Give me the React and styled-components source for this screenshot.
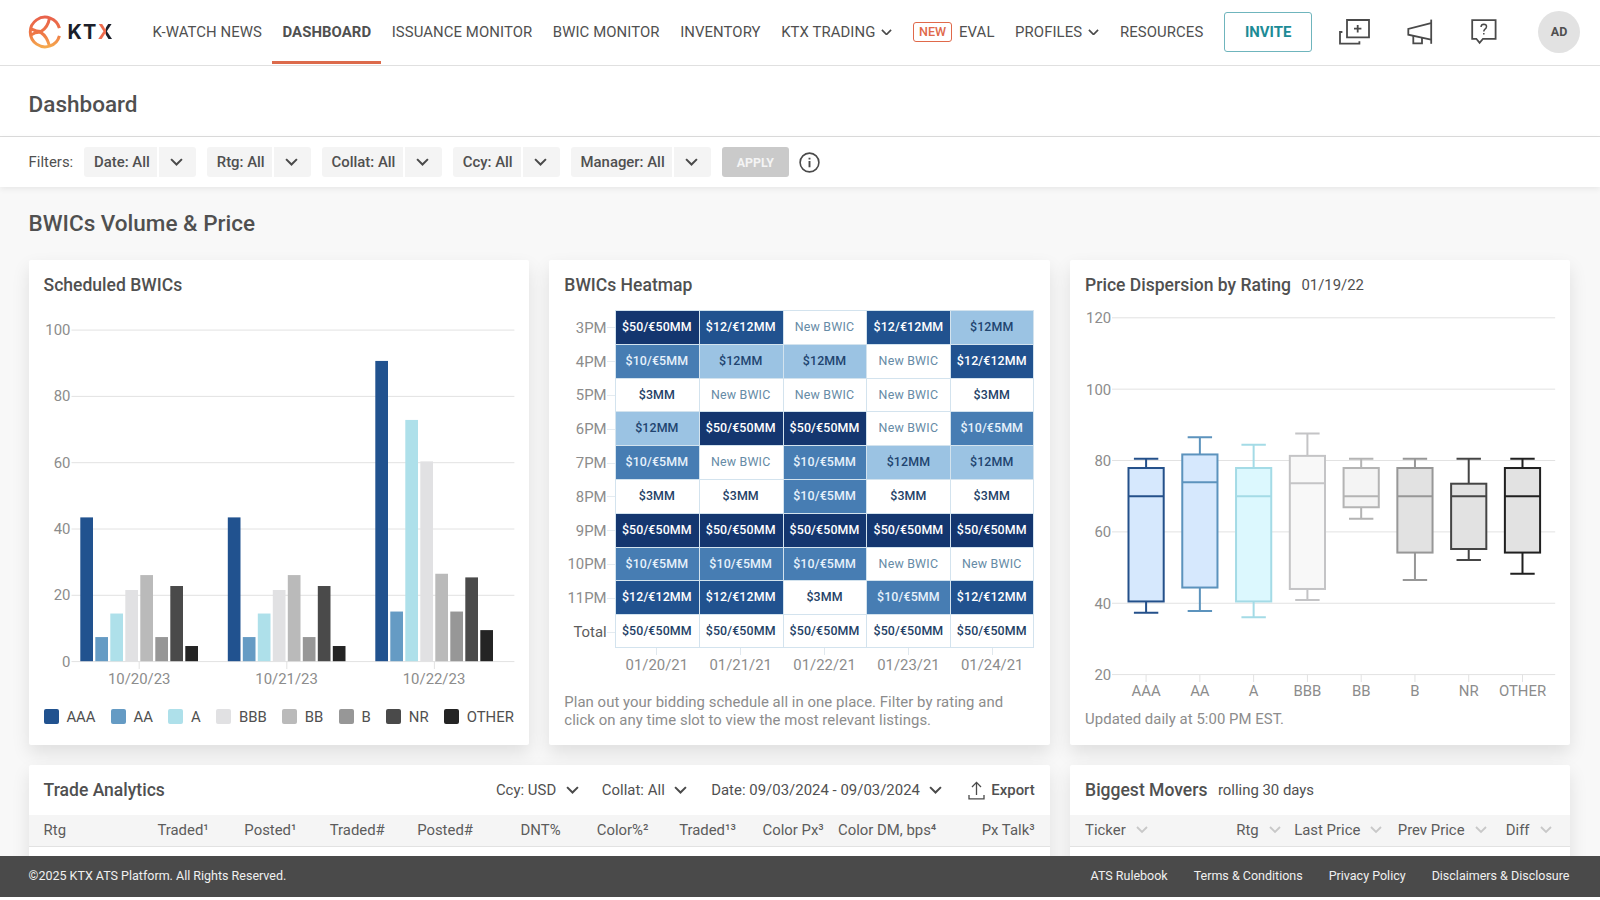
import React from 'react';
import styled, {createGlobalStyle} from 'styled-components';


const GlobalStyle = createGlobalStyle`
    * {
        box-sizing: border-box;
    }

    body {
        margin: 0;
        background: #fff;
        color: #505050;
        font-family: Roboto, "Liberation Sans", sans-serif;
        font-size: 14.9px;
    }
`;

const Page = styled.div`
    display: flex;
    flex-direction: column;
    height: 900px;
    padding-bottom: 3px;
    overflow: hidden;
`;

/* ---------- header ---------- */

const Header = styled.header`
    display: flex;
    align-items: center;
    flex: none;
    height: 66px;
    padding: 0 20px 2px 28px;
    border-bottom: 1px solid #e0e0e0;
    background: #fff;
`;

const Logo = styled.div`
    display: flex;
    align-items: center;
    width: 124.5px;
    gap: 5.5px;
`;

const LogoText = styled.span`
    font-family: Inter, sans-serif;
    font-size: 20px;
    font-weight: 700;
    letter-spacing: 1.2px;
    color: #1c1f2a;
`;

const LogoX = styled.span`
    background: linear-gradient(90deg, #ee6a4c 52%, #1c1f2a 52%);
    background-clip: text;
    -webkit-background-clip: text;
    color: transparent;
`;

const Nav = styled.nav`
    display: flex;
    align-items: center;
    height: 64px;
    white-space: nowrap;
`;

const NavItem = styled.a`
    display: flex;
    align-items: center;
    height: 64px;
    padding: 4px ${p => p.$active ? '10px' : '0'} 0;
    margin: 0 ${p => p.$active ? '0.2px' : '10.3px'};
    border-bottom: 3px solid ${p => p.$active ? '#dc6a4b' : 'transparent'};
    font-weight: ${p => p.$active ? 700 : 400};
    letter-spacing: 0.08px;

    &:first-child {
        margin-left: 0;
    }

    svg {
        margin: 0 0.8px 0 5.5px;
    }
`;

const NewTag = styled.span`
    height: 20px;
    padding: 0 4.6px;
    margin-right: 7.2px;
    border: 1px solid #e0694a;
    border-radius: 3px;
    color: #e0694a;
    font-size: 12.6px;
    font-weight: 500;
    line-height: 18px;
`;

const InviteButton = styled.button`
    width: 87.5px;
    height: 40px;
    margin-left: 10.8px;
    border: 1px solid #6fb5bd;
    border-radius: 3px;
    background: #fff;
    color: #1c8b96;
    font: 700 14.9px Roboto, sans-serif;
`;

const HeaderIcons = styled.div`
    display: grid;
    grid-template-columns: 67.5px 64.8px 1fr 42px;
    flex: 1;
    align-items: center;
    margin-left: 27.2px;
`;

const Avatar = styled.div`
    width: 42px;
    height: 42px;
    border-radius: 50%;
    background: #e2e2e2;
    font-size: 12.5px;
    font-weight: 700;
    line-height: 42px;
    text-align: center;
`;

/* ---------- title and filters ---------- */

const TitleBar = styled.div`
    display: flex;
    align-items: center;
    flex: none;
    height: 71px;
    padding: 6px 28.6px 0;
    border-bottom: 1px solid #dcdcdc;
`;

const PageTitle = styled.h1`
    margin: 0;
    font-size: 22.5px;
    font-weight: 500;
`;

const FilterBar = styled.div`
    display: flex;
    align-items: center;
    flex: none;
    height: 50px;
    padding: 0 28.6px;
    background: #fff;
    box-shadow: 0 2px 6px rgba(0, 0, 0, 0.07);
    z-index: 1;
`;

const FilterLabel = styled.span`
    width: 55.4px;
`;

const Filter = styled.div`
    display: flex;
    gap: 2px;
    height: 30px;
    width: ${p => p.$width}px;
    margin-right: 10.5px;
    font-weight: 500;
    white-space: nowrap;
`;

const FilterText = styled.div`
    flex: 1;
    padding-left: 10px;
    border-radius: 3px 0 0 3px;
    background: #f4f4f4;
    line-height: 30px;
`;

const FilterArrow = styled.div`
    display: flex;
    align-items: center;
    justify-content: center;
    width: 37px;
    padding-right: 2px;
    border-radius: 0 3px 3px 0;
    background: #f4f4f4;
`;

const ApplyButton = styled.button`
    width: 67.5px;
    height: 30px;
    margin-right: 10px;
    border: 0;
    border-radius: 3px;
    background: #cacaca;
    color: #f4f4f4;
    font: 700 12.4px Roboto, sans-serif;
`;

/* ---------- cards ---------- */

const Main = styled.main`
    flex: 1;
    min-height: 0;
    padding: 0 29.6px 0 28.6px;
    overflow: hidden;
    background: #f8f8f8;
`;

const SectionTitle = styled.h2`
    height: 73px;
    margin: 0;
    font-size: 22.5px;
    font-weight: 500;
    line-height: 73px;
`;

const Cards = styled.div`
    display: grid;
    grid-template-columns: repeat(3, 1fr);
    grid-template-rows: 485px 485px;
    gap: 20px 20.4px;
`;

const Card = styled.section`
    display: flex;
    flex-direction: column;
    min-width: 0;
    grid-column: span ${p => p.$span || 1};
    border-radius: 2px;
    background: #fff;
    box-shadow: 0 8px 18px rgba(0, 0, 0, 0.1);
`;

const CardHead = styled.div`
    display: flex;
    align-items: center;
    flex: none;
    height: 50px;
    padding: 0 15px;
    white-space: nowrap;
`;

const CardTitle = styled.h3`
    margin: 0 10.5px 0 0;
    font-size: 17.55px;
    font-weight: 500;
`;

const CardBody = styled.div`
    padding: 0 15px;
`;

const Note = styled.p`
    margin: ${p => p.$top}px 15px 0;
    color: #8c8c8c;
    letter-spacing: 0.05px;
    line-height: 17.7px;
`;

const Chart = styled.svg`
    display: block;
    font-size: 14.9px;
    fill: #8c8c8c;
    overflow: visible;
`;

const Legend = styled.div`
    display: flex;
    justify-content: space-between;
    margin-top: 17px;
`;

const LegendItem = styled.span`
    display: flex;
    align-items: center;
    gap: 7.8px;
    height: 15px;

    &::before {
        content: '';
        width: 15px;
        height: 15px;
        border-radius: 2px;
        background: ${p => p.$color};
    }
`;

/* ---------- heatmap ---------- */

const HeatGrid = styled.div`
    display: grid;
    grid-template-columns: 50.6px repeat(5, 1fr);
    grid-auto-rows: 33.8px;
    margin-right: 0.5px;
`;

const HourLabel = styled.div`
    display: flex;
    align-items: center;
    justify-content: flex-end;
    padding-top: 2px;
    color: ${p => p.$dark ? '#5c5c5c' : '#8c8c8c'};

    &::after {
        content: '';
        width: 8.3px;
        height: 1px;
        background: #e4ebf0;
    }
`;

const tones = {
    navy: {bg: '#14366f', text: '#fff'},
    blue: {bg: '#21528f', text: '#fff'},
    mid: {bg: '#477db3', text: '#e6f1fb'},
    light: {bg: '#9bc3e3', text: '#21446f'},
    plain: {bg: '#fff', text: '#243f66'},
    empty: {bg: '#fff', text: '#668ba6'},
};

const HeatCell = styled.div`
    padding-right: 1px;
    border: 1px solid #d3e3ee;
    border-width: 1px 0 0 1px;
    background: ${p => tones[p.$tone].bg};
    color: ${p => tones[p.$tone].text};
    font-size: 12.4px;
    font-weight: ${p => p.$tone === 'empty' ? 400 : 500};
    letter-spacing: ${p => p.$tone === 'empty' ? '0.2px' : '0.12px'};
    line-height: 32px;
    text-align: center;
    white-space: nowrap;

    &:nth-child(6n) {
        border-right-width: 1px;
    }

    &:nth-child(n + 55) {
        border-bottom-width: 1px;
    }
`;

const DateLabel = styled.div`
    display: flex;
    flex-direction: column;
    align-items: center;
    color: #8c8c8c;

    &::before {
        content: '';
        width: 1px;
        height: 7px;
        margin-bottom: 1px;
        background: #e0e8ee;
    }
`;

/* ---------- tables ---------- */

const Tools = styled.div`
    display: flex;
    align-items: center;
    margin-left: auto;
`;

const Tool = styled.span`
    display: flex;
    align-items: center;
    gap: 9.4px;
    margin-right: ${p => p.$gap}px;
    letter-spacing: 0.03px;
`;

const ExportButton = styled.span`
    display: flex;
    align-items: center;
    gap: 6px;
    font-weight: 500;
`;

const TableHead = styled.div`
    display: grid;
    grid-template-columns: ${p => p.$cols};
    align-items: center;
    height: 32px;
    padding: 0 15px 1px;
    border-bottom: 1px solid #e2e2e2;
    background: #f5f5f5;
    color: #5c5c5c;
    white-space: nowrap;
`;

const Th = styled.span`
    text-align: right;

    &:first-child {
        text-align: left;
    }
`;

const SortTh = styled.span`
    display: flex;
    align-items: center;
    justify-content: ${p => p.$left ? 'flex-start' : 'flex-end'};
    gap: 10px;
`;

/* ---------- footer ---------- */

const Footer = styled.footer`
    display: flex;
    align-items: center;
    justify-content: space-between;
    flex: none;
    height: 41px;
    padding: 0 30.5px 2.5px 28.6px;
    background: #4a4a4a;
    color: #f0f0f0;
    font-size: 12.5px;
`;

const FooterLinks = styled.div`
    display: flex;
    gap: 26px;
`;


const Chevron = ({size = 12, color = '#4a4a4a', stroke = 2}) => (
    <svg width={size} height={size * 0.6} viewBox="0 0 12 7.2" fill="none">
        <path d="M1 1L6 6L11 1" stroke={color} strokeWidth={stroke * 12 / size}/>
    </svg>
);

const LogoMark = () => (
    <svg width="34" height="34" viewBox="0 0 34 34" fill="none">
        <defs>
            <linearGradient id="mark" x1="0" y1="0" x2="0" y2="34" gradientUnits="userSpaceOnUse">
                <stop offset="0" stopColor="#e8604c"/>
                <stop offset="0.55" stopColor="#ee7746"/>
                <stop offset="1" stopColor="#f6b04f"/>
            </linearGradient>
        </defs>
        <g stroke="url(#mark)" strokeWidth="3">
            <path d="M31.4 13.2A14.8 14.8 0 1 0 31.4 20.8"/>
            <path d="M21.4 3.4C20.5 9 17.6 13.6 13 16.6Q9 16.6 3 13.8"/>
            <path d="M3 20Q8.5 16.6 13 17.6Q18.6 21 21.4 30.6"/>
        </g>
    </svg>
);

const FramesIcon = () => (
    <svg width="31" height="26" viewBox="0 0 31 26" fill="none" stroke="#4a4a4a" strokeWidth="1.8">
        <path d="M3.4 13H1V24.7H20.4V22.2"/>
        <path d="M8 1H30V18.4H8Z"/>
        <path d="M18.7 6V13.4M15 9.7H22.4"/>
    </svg>
);

const MegaphoneIcon = () => (
    <svg width="26" height="26" viewBox="0 0 26 26" fill="none" stroke="#4a4a4a" strokeWidth="1.8">
        <path d="M24.2 0.6V24.8"/>
        <path d="M24 4.2L1.3 10V15.7L24 20.7"/>
        <path d="M6.3 17V24.3H15V19"/>
    </svg>
);

const HelpIcon = () => (
    <svg width="26" height="26" viewBox="0 0 26 26" fill="none" stroke="#4a4a4a" strokeWidth="1.8">
        <path d="M1.2 1.2H24.6V19.8H12L8.6 23.9L5.3 19.8H1.2Z"/>
        <path d="M10 8Q10.2 5.2 12.8 5.2Q15.6 5.3 15.5 7.8Q15.4 9.2 13.8 10.3Q12.8 11.1 12.8 12.4M12.8 13.9V15.6" strokeWidth="1.5"/>
    </svg>
);

const InfoIcon = () => (
    <svg width="21" height="21" viewBox="0 0 21 21" fill="none" stroke="#4a4a4a">
        <circle cx="10.5" cy="10.5" r="9.4" strokeWidth="1.6"/>
        <path d="M10.5 9V15.2M10.5 5.8V7.6" strokeWidth="1.9"/>
    </svg>
);

const ExportIcon = () => (
    <svg width="17" height="19" viewBox="0 0 17 19" fill="none" stroke="#4a4a4a" strokeWidth="1.3">
        <path d="M8.5 14V1.4M4 6L8.5 1.4L13 6"/>
        <path d="M1 14V17.8H16V14"/>
    </svg>
);


const ratings = [
    {name: 'AAA', color: '#21528f', fill: '#d6e8fd', line: '#24508a'},
    {name: 'AA', color: '#659bc4', fill: '#d6e8fd', line: '#5c93bd'},
    {name: 'A', color: '#aee0ea', fill: '#dcf8fe', line: '#a4dbe6'},
    {name: 'BBB', color: '#e1e1e3', fill: '#f8f8f8', line: '#c4c4c6'},
    {name: 'BB', color: '#bababa', fill: '#f4f4f4', line: '#b4b4b4'},
    {name: 'B', color: '#979797', fill: '#e2e2e2', line: '#979797'},
    {name: 'NR', color: '#4a4a4a', fill: '#e2e2e2', line: '#454545'},
    {name: 'OTHER', color: '#242424', fill: '#e2e2e2', line: '#202020'},
];

const bwics = [
    {date: '10/20/23', values: [43.5, 7.4, 14.5, 21.6, 26.1, 7.4, 22.8, 4.7]},
    {date: '10/21/23', values: [43.5, 7.4, 14.5, 21.6, 26.1, 7.4, 22.8, 4.7]},
    {date: '10/22/23', values: [90.7, 15.1, 72.9, 60.4, 26.5, 15.1, 25.4, 9.5]},
];

// top whisker, box top, median, box bottom, bottom whisker
const prices = [
    [80.5, 77.9, 70, 40.5, 37.3],
    [86.5, 81.7, 73.9, 44.4, 37.8],
    [84.4, 77.9, 70, 40.5, 36.1],
    [87.6, 81.3, 73.6, 44, 40.9],
    [80.5, 77.9, 70, 66.9, 63.7],
    [80.5, 77.9, 70, 54.2, 46.5],
    [80.5, 73.5, 70, 55.2, 52.1],
    [80.5, 77.9, 70, 54.2, 48.3],
];

const cells = {
    a: ['$50/€50MM', 'navy'],
    b: ['$12/€12MM', 'blue'],
    c: ['$10/€5MM', 'mid'],
    d: ['$12MM', 'light'],
    e: ['$3MM', 'plain'],
    n: ['New BWIC', 'empty'],
    t: ['$50/€50MM', 'plain'],
};

const hours = [
    ['3PM', 'abnbd'],
    ['4PM', 'cddnb'],
    ['5PM', 'ennne'],
    ['6PM', 'daanc'],
    ['7PM', 'cncdd'],
    ['8PM', 'eecee'],
    ['9PM', 'aaaaa'],
    ['10PM', 'cccnn'],
    ['11PM', 'bbecb'],
    ['Total', 'ttttt'],
];

const heatDates = ['01/20/21', '01/21/21', '01/22/21', '01/23/21', '01/24/21'];


const BarChart = () => {
    const y = v => 351.6 - v * 3.315;
    return (
        <Chart width="471" height="382">
            {[0, 20, 40, 60, 80, 100].map(v => (
                <g key={v}>
                    <line x1="27.5" x2="470.4" y1={y(v)} y2={y(v)} stroke="#e2e2e2"/>
                    <text x="26.4" y={y(v) + 5} textAnchor="end">{v}</text>
                </g>
            ))}
            {bwics.map((day, i) => (
                <g key={day.date}>
                    <line x1={95.2 + i * 147.6} x2={95.2 + i * 147.6} y1="352" y2="359" stroke="#e2e2e2"/>
                    {day.values.map((v, j) => (
                        <rect key={j} x={36.3 + i * 147.5 + j * 15} y={y(v)} width="12.7" height={v * 3.315 - 0.4}
                              fill={ratings[j].color}/>
                    ))}
                    <text x={95.2 + i * 147.4} y="374" textAnchor="middle">{day.date}</text>
                </g>
            ))}
        </Chart>
    );
};

const BoxChart = () => {
    const y = v => 364.6 - (v - 20) * 3.568;
    return (
        <Chart width="471" height="395">
            {[20, 40, 60, 80, 100, 120].map(v => (
                <g key={v}>
                    <line x1="27" x2="470.2" y1={y(v)} y2={y(v)} stroke="#e2e2e2"/>
                    <text x="26.2" y={y(v) + 5.6} textAnchor="end">{v}</text>
                </g>
            ))}
            {prices.map(([high, top, median, bottom, low], i) => {
                const x = 61.1 + i * 53.77;
                const {name, fill, line} = ratings[i];
                return (
                    <g key={name}>
                        <line x1={x} x2={x} y1="364.6" y2="372" stroke="#e2e2e2"/>
                        <path d={`M${x} ${y(high)}V${y(low)}M${x - 12.2} ${y(high)}h24.4M${x - 12.2} ${y(low)}h24.4`}
                              stroke={line} strokeWidth="2"/>
                        <rect x={x - 17.6} y={y(top)} width="35.2" height={y(bottom) - y(top)}
                              fill={fill} stroke={line} strokeWidth="2"/>
                        <line x1={x - 17.6} x2={x + 17.6} y1={y(median)} y2={y(median)} stroke={line} strokeWidth="2"/>
                        <text x={x} y="386.4" textAnchor="middle">{name}</text>
                    </g>
                );
            })}
        </Chart>
    );
};

const Heatmap = () => (
    <HeatGrid>
        {hours.map(([hour, row]) => (
            <React.Fragment key={hour}>
                <HourLabel $dark={hour === 'Total'}>{hour}</HourLabel>
                {row.split('').map((c, i) => (
                    <HeatCell key={i} $tone={cells[c][1]}>{cells[c][0]}</HeatCell>
                ))}
            </React.Fragment>
        ))}
        <span/>
        {heatDates.map(date => <DateLabel key={date}>{date}</DateLabel>)}
    </HeatGrid>
);

const TopBar = () => (
    <Header>
        <Logo>
            <LogoMark/>
            <LogoText>KT<LogoX>X</LogoX></LogoText>
        </Logo>
        <Nav>
            <NavItem>K-WATCH NEWS</NavItem>
            <NavItem $active>DASHBOARD</NavItem>
            <NavItem>ISSUANCE MONITOR</NavItem>
            <NavItem>BWIC MONITOR</NavItem>
            <NavItem>INVENTORY</NavItem>
            <NavItem>KTX TRADING <Chevron size={11} stroke={1.7}/></NavItem>
            <NavItem><NewTag>NEW</NewTag>EVAL</NavItem>
            <NavItem>PROFILES <Chevron size={11} stroke={1.7}/></NavItem>
            <NavItem>RESOURCES</NavItem>
        </Nav>
        <InviteButton>INVITE</InviteButton>
        <HeaderIcons>
            <FramesIcon/>
            <MegaphoneIcon/>
            <HelpIcon/>
            <Avatar>AD</Avatar>
        </HeaderIcons>
    </Header>
);

const filters = [
    ['Date: All', 112.3],
    ['Rtg: All', 104.3],
    ['Collat: All', 120.7],
    ['Ccy: All', 107.3],
    ['Manager: All', 140.5],
];

const tradeColumns = [
    'Rtg', 'Traded¹', 'Posted¹', 'Traded#', 'Posted#', 'DNT%', 'Color%²', 'Traded¹³', 'Color Px³', 'Color DM, bps⁴', 'Px Talk³',
];

const moverColumns = ['Ticker', 'Rtg', 'Last Price', 'Prev Price', 'Diff'];

export default function App() {
    return (
        <Page>
            <GlobalStyle/>
            <TopBar/>
            <TitleBar>
                <PageTitle>Dashboard</PageTitle>
            </TitleBar>
            <FilterBar>
                <FilterLabel>Filters:</FilterLabel>
                {filters.map(([text, width]) => (
                    <Filter key={text} $width={width}>
                        <FilterText>{text}</FilterText>
                        <FilterArrow><Chevron size={13}/></FilterArrow>
                    </Filter>
                ))}
                <ApplyButton>APPLY</ApplyButton>
                <InfoIcon/>
            </FilterBar>
            <Main>
                <SectionTitle>BWICs Volume &amp; Price</SectionTitle>
                <Cards>
                    <Card>
                        <CardHead><CardTitle>Scheduled BWICs</CardTitle></CardHead>
                        <CardBody>
                            <BarChart/>
                            <Legend>
                                {ratings.map(r => <LegendItem key={r.name} $color={r.color}>{r.name}</LegendItem>)}
                            </Legend>
                        </CardBody>
                    </Card>
                    <Card>
                        <CardHead><CardTitle>BWICs Heatmap</CardTitle></CardHead>
                        <CardBody><Heatmap/></CardBody>
                        <Note $top={12.6}>
                            Plan out your bidding schedule all in one place. Filter by rating and
                            click on any time slot to view the most relevant listings.
                        </Note>
                    </Card>
                    <Card>
                        <CardHead>
                            <CardTitle>Price Dispersion by Rating</CardTitle>
                            01/19/22
                        </CardHead>
                        <CardBody><BoxChart/></CardBody>
                        <Note $top={5.5}>Updated daily at 5:00 PM EST.</Note>
                    </Card>
                    <Card $span={2}>
                        <CardHead>
                            <CardTitle>Trade Analytics</CardTitle>
                            <Tools>
                                <Tool $gap={23.2}>Ccy: USD <Chevron size={13}/></Tool>
                                <Tool $gap={24}>Collat: All <Chevron size={13}/></Tool>
                                <Tool $gap={26}>Date: 09/03/2024 - 09/03/2024 <Chevron size={13}/></Tool>
                                <ExportButton><ExportIcon/>Export</ExportButton>
                            </Tools>
                        </CardHead>
                        <TableHead $cols="77.2px 88px 87.7px 88.3px 88.2px 87.6px 87.9px 87.5px 87.8px 112.6px 1fr">
                            {tradeColumns.map(name => <Th key={name}>{name}</Th>)}
                        </TableHead>
                    </Card>
                    <Card>
                        <CardHead>
                            <CardTitle>Biggest Movers</CardTitle>
                            rolling 30 days
                        </CardHead>
                        <TableHead $cols="100px 95.6px 101.7px 104.2px 65px">
                            {moverColumns.map((name, i) => (
                                <SortTh key={name} $left={i === 0}>
                                    {name} <Chevron size={12} color="#c8c8c8" stroke={1.8}/>
                                </SortTh>
                            ))}
                        </TableHead>
                    </Card>
                </Cards>
            </Main>
            <Footer>
                <span>©2025 KTX ATS Platform. All Rights Reserved.</span>
                <FooterLinks>
                    <span>ATS Rulebook</span>
                    <span>Terms &amp; Conditions</span>
                    <span>Privacy Policy</span>
                    <span>Disclaimers &amp; Disclosure</span>
                </FooterLinks>
            </Footer>
        </Page>
    );
}
